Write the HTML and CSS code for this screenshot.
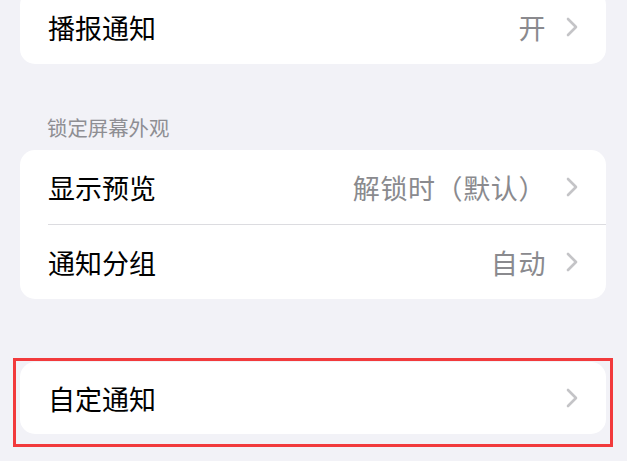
FILE: index.html
```html
<!DOCTYPE html>
<html lang="zh-CN">
<head>
<meta charset="utf-8">
<link rel="stylesheet" href="styles.css">
</head>
<body>
<div class="page">
  <div class="card card-first">
    <div class="row">
      <span class="label">播报通知</span>
      <span class="value">开</span>
      <svg class="chev" viewBox="0 0 12 20" width="12" height="20"><path d="M2 2 L10 10 L2 18" /></svg>
    </div>
  </div>

  <div class="section-header">锁定屏幕外观</div>
  <div class="card">
    <div class="row">
      <span class="label">显示预览</span>
      <span class="value">解锁时（默认）</span>
      <svg class="chev" viewBox="0 0 12 20" width="12" height="20"><path d="M2 2 L10 10 L2 18" /></svg>
    </div>
    <div class="sep"></div>
    <div class="row">
      <span class="label">通知分组</span>
      <span class="value">自动</span>
      <svg class="chev" viewBox="0 0 12 20" width="12" height="20"><path d="M2 2 L10 10 L2 18" /></svg>
    </div>
  </div>

  <div class="card card-last">
    <div class="row row-short">
      <span class="label">自定通知</span>
      <svg class="chev" viewBox="0 0 12 20" width="12" height="20"><path d="M2 2 L10 10 L2 18" /></svg>
    </div>
  </div>
</div>
<div class="highlight"></div>
</body>
</html>
```

FILE: styles.css
```css
html, body {
  margin: 0;
  padding: 0;
  background: #f2f2f7;
  height: 100%;
  overflow: hidden;
}
body {
  font-family: "Noto Sans CJK SC", "Noto Sans", sans-serif;
  position: relative;
}
.page {
  padding: 0 21px 0 20px;
}
.card {
  background: #ffffff;
  border-radius: 15px;
  overflow: hidden;
}
.card-first {
  margin-top: -10px;
}
.row {
  height: 74px;
  display: flex;
  align-items: center;
  padding: 0 28px 0 28px;
}
.row-short {
  height: 72px;
}
.label {
  font-size: 27px;
  color: #000000;
  flex: 1;
  line-height: 1;
}
.value {
  font-size: 27px;
  letter-spacing: 0.6px;
  color: #8a8a8e;
  margin-right: 20px;
  line-height: 1;
}
.chev {
  flex: none;
}
.chev path {
  fill: none;
  stroke: #c4c4c7;
  stroke-width: 2.6;
  stroke-linecap: round;
  stroke-linejoin: round;
}
.sep {
  height: 1px;
  background: #dcdce0;
  margin-left: 28px;
}
.section-header {
  font-size: 20.4px;
  color: #8e8e93;
  line-height: 28px;
  padding-left: 27px;
  margin-top: 49px;
  margin-bottom: 9px;
}
.card-last {
  margin-top: 63px;
}
.highlight {
  position: absolute;
  left: 13px;
  top: 358px;
  width: 594px;
  height: 83px;
  border: 3px solid #f23a3c;
}
```
